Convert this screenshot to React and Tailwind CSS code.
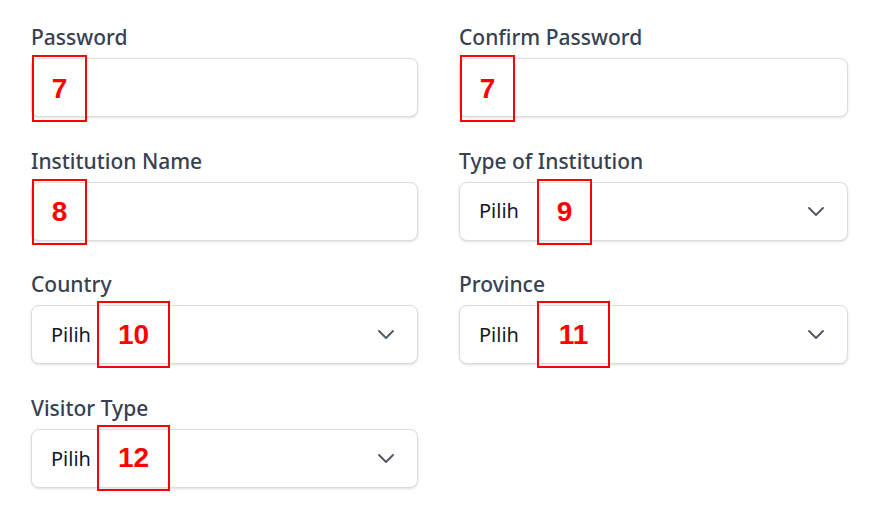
import React from 'react';

const FONT = { fontFamily: '"Noto Sans", "Open Sans", sans-serif' };

function Marker({ label, className }) {
  return (
    <div
      className={`absolute border-2 border-[#ff0000] flex items-center justify-center text-[#ff0000] font-bold text-[28px] leading-none ${className}`}
      style={{ fontFamily: '"Liberation Sans", Arial, sans-serif' }}
    >
      {label}
    </div>
  );
}

function Chevron() {
  return (
    <svg width="16" height="9" viewBox="0 0 16 9" fill="none" className="text-[#4b5563]">
      <path d="M1 1l7 7 7-7" stroke="currentColor" strokeWidth="1.8" strokeLinecap="round" strokeLinejoin="round" />
    </svg>
  );
}

function Field({ label, select, marker }) {
  return (
    <div className="relative flex flex-col">
      <label className="text-[21px] leading-[28px] font-medium text-[#374151] mb-[7px]">{label}</label>
      {select ? (
        <div className="h-[59px] rounded-lg border border-[#d9dce1] bg-white shadow-sm flex items-center justify-between pl-[19px] pr-[23px]">
          <span className="text-[20px] text-[#111827]">Pilih</span>
          <Chevron />
        </div>
      ) : (
        <div className="h-[59px] rounded-lg border border-[#d9dce1] bg-white shadow-sm" />
      )}
      {marker}
    </div>
  );
}

export default function App() {
  return (
    <div className="w-[874px] h-[513px] bg-white pt-[23px] pl-[31px]" style={FONT}>
      <div className="grid grid-cols-[387px_389px] gap-x-[41px] gap-y-[29.7px]">
        <Field label="Password" marker={<Marker label="7" className="left-[1px] top-[32px] w-[55px] h-[67px]" />} />
        <Field label="Confirm Password" marker={<Marker label="7" className="left-[1px] top-[32px] w-[55px] h-[67px]" />} />
        <Field label="Institution Name" marker={<Marker label="8" className="left-[1px] top-[32px] w-[55px] h-[66px]" />} />
        <Field label="Type of Institution" select marker={<Marker label="9" className="left-[78px] top-[32px] w-[55px] h-[66px]" />} />
        <Field label="Country" select marker={<Marker label="10" className="left-[66px] top-[31px] w-[73px] h-[67px]" />} />
        <Field label="Province" select marker={<Marker label="11" className="left-[78px] top-[31px] w-[73px] h-[67px]" />} />
        <Field label="Visitor Type" select marker={<Marker label="12" className="left-[66px] top-[31px] w-[73px] h-[66px]" />} />
      </div>
    </div>
  );
}
